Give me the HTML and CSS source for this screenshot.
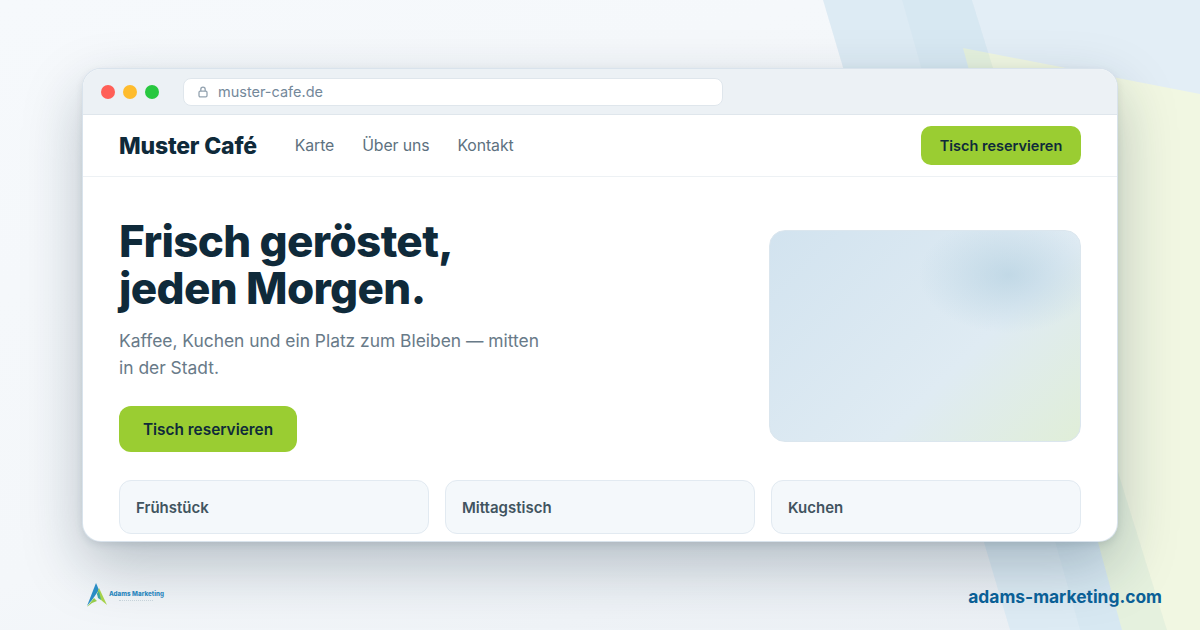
FILE: index.html
```html
<!DOCTYPE html>
<html lang="de">
<head>
  <meta charset="UTF-8" />
  <title>Muster Café</title>
  <link rel="stylesheet" href="styles.css">
</head>
<body>
  <svg class="bg-shapes" width="1200" height="630" viewBox="0 0 1200 630" aria-hidden="true">
    <polygon points="823,0 1200,0 1200,630 1010,630" fill="#e3eef6"/>
    <polygon points="963,48 1200,94 1200,630 1122,630" fill="#f1f7e2"/>
    <polygon points="823,0 972,0 1167,630 1010,630" fill="#0a6ea8" fill-opacity="0.025"/>
    <polygon points="902,0 972,0 1167,630 1080,630" fill="#0a6ea8" fill-opacity="0.025"/>
  </svg>

  <div class="window">
    <div class="chrome">
      <div class="dots">
        <span class="dot red"></span>
        <span class="dot yellow"></span>
        <span class="dot green"></span>
      </div>
      <div class="urlbar">
        <svg class="lock" width="12" height="12" viewBox="0 0 12 12" fill="none" stroke="#94a3b0" stroke-width="1.3">
          <rect x="2" y="5.2" width="8" height="5.6" rx="1.2"/>
          <path d="M3.8 5.2V3.4a2.2 2.2 0 0 1 4.4 0v1.8"/>
        </svg>
        <span>muster-cafe.de</span>
      </div>
    </div>

    <nav class="nav">
      <div class="brand">Muster Café</div>
      <div class="nav-links">
        <a>Karte</a>
        <a>Über uns</a>
        <a>Kontakt</a>
      </div>
      <button class="btn btn-small">Tisch reservieren</button>
    </nav>

    <div class="content">
      <section class="hero">
        <div class="hero-text">
          <h1>Frisch geröstet,<br>jeden Morgen.</h1>
          <p>Kaffee, Kuchen und ein Platz zum Bleiben — mitten in der Stadt.</p>
          <button class="btn btn-large">Tisch reservieren</button>
        </div>
        <div class="hero-image"></div>
      </section>
      <div class="cards">
        <div class="card">Frühstück</div>
        <div class="card">Mittagstisch</div>
        <div class="card">Kuchen</div>
      </div>
    </div>
  </div>

  <footer class="footer">
    <div class="logo">
      <svg width="24" height="26" viewBox="0 0 24 26">
        <polygon points="11,1 14,8 7,18 2,24" fill="#2a8cc4"/>
        <polygon points="14,6 22,23 16,18 12,12" fill="#a6d24a"/>
        <polygon points="2,25 9,16 12,19 7,21" fill="#96cc4a"/>
        <polygon points="12,12 14,9 16,18 13,16" fill="#3aa6a2"/>
      </svg>
      <div class="logo-text">
        <div class="logo-name">Adams Marketing</div>
        <div class="logo-dots"></div>
      </div>
    </div>
    <div class="site">adams-marketing.com</div>
  </footer>
</body>
</html>
```

FILE: styles.css
```css
* {
  box-sizing: border-box;
}

body {
  margin: 0;
  width: 1200px;
  height: 630px;
  overflow: hidden;
  position: relative;
  font-family: "Inter", sans-serif;
  color: #0f2a3a;
  background: linear-gradient(160deg, #f6f9fc 0%, #f4f7fa 55%, #eaeff4 100%);
  padding: 69px 83px 0;
}

.bg-shapes {
  position: absolute;
  top: 0;
  left: 0;
}

.window {
  position: relative;
  height: 472px;
  background: #ffffff;
  border-radius: 18px;
  overflow: hidden;
  box-shadow:
    0 0 0 1px #d9e3ec,
    0 24px 60px rgba(15, 42, 58, 0.27),
    0 3px 8px rgba(15, 42, 58, 0.12);
}

.chrome {
  display: flex;
  align-items: center;
  height: 46px;
  padding: 0 18px;
  background: #ecf1f5;
  border-bottom: 1px solid #dfe6ec;
}

.dots {
  display: flex;
  gap: 8px;
  margin-right: 24px;
}

.dot {
  width: 14px;
  height: 14px;
  border-radius: 50%;
}

.red { background: #ff5f57; }
.yellow { background: #febc2e; }
.green { background: #28c840; }

.urlbar {
  display: flex;
  align-items: center;
  gap: 9px;
  width: 540px;
  height: 28px;
  padding: 0 13px;
  background: #ffffff;
  border: 1px solid #dfe6ec;
  border-radius: 8px;
  font-size: 14.5px;
  color: #74889a;
}

.nav {
  display: flex;
  align-items: center;
  height: 62px;
  padding: 0 36px;
  border-bottom: 1px solid #edf1f4;
}

.brand {
  font-size: 23px;
  font-weight: 800;
  letter-spacing: -0.2px;
  margin-right: 38px;
}

.nav-links {
  display: flex;
  gap: 28px;
  flex: 1;
  font-size: 15.8px;
  letter-spacing: -0.1px;
  color: #5d7180;
}

.btn {
  border: none;
  font-family: inherit;
  font-weight: 600;
  color: #0f2a3a;
  background: #9acd32;
}

.btn-small {
  width: 160px;
  height: 39px;
  border-radius: 10px;
  font-size: 14.5px;
}

.btn-large {
  width: 178px;
  height: 46px;
  border-radius: 12px;
  font-size: 15.4px;
}

.content {
  padding: 0 36px;
}

.hero {
  display: flex;
  justify-content: space-between;
  padding-top: 41px;
}

.hero-text {
  width: 430px;
}

h1 {
  margin: 0;
  font-size: 44px;
  line-height: 47px;
  font-weight: 800;
  letter-spacing: -0.65px;
}

.hero-text p {
  margin: 15px 0 25px;
  font-size: 17.4px;
  line-height: 27px;
  color: #687a88;
}

.hero-image {
  width: 312px;
  height: 212px;
  margin-top: 12px;
  border: 1px solid #dbe6ee;
  border-radius: 16px;
  background:
    radial-gradient(ellipse 90px 58px at 77% 21%, rgba(175, 205, 222, 0.6) 0, rgba(175, 205, 222, 0) 100%),
    linear-gradient(135deg, #d2e3ef 0%, #dfebf3 62%, #e0eed8 100%);
}

.cards {
  display: grid;
  grid-template-columns: repeat(3, 1fr);
  gap: 16px;
  margin-top: 28px;
}

.card {
  height: 54px;
  padding: 0 16px;
  display: flex;
  align-items: center;
  font-size: 15px;
  font-weight: 600;
  color: #41545f;
  background: #f4f8fb;
  border: 1px solid #e2eaf1;
  border-radius: 12px;
}

.footer {
  position: relative;
  display: flex;
  align-items: center;
  justify-content: space-between;
  margin-top: 41px;
  margin-right: -45px;
}

.logo {
  display: flex;
  align-items: center;
  gap: 0;
  margin-left: 2px;
}

.logo-text {
  display: flex;
  flex-direction: column;
  align-items: center;
  gap: 2px;
}

.logo-name {
  font-size: 6.2px;
  line-height: 8px;
  font-weight: 800;
  letter-spacing: 0.05px;
  color: #2a86bd;
}

.logo-dots {
  width: 34px;
  border-bottom: 1px dotted #c6d2da;
}

.site {
  padding-top: 2px;
  font-size: 17.4px;
  font-weight: 700;
  color: #0a5f96;
}
```
